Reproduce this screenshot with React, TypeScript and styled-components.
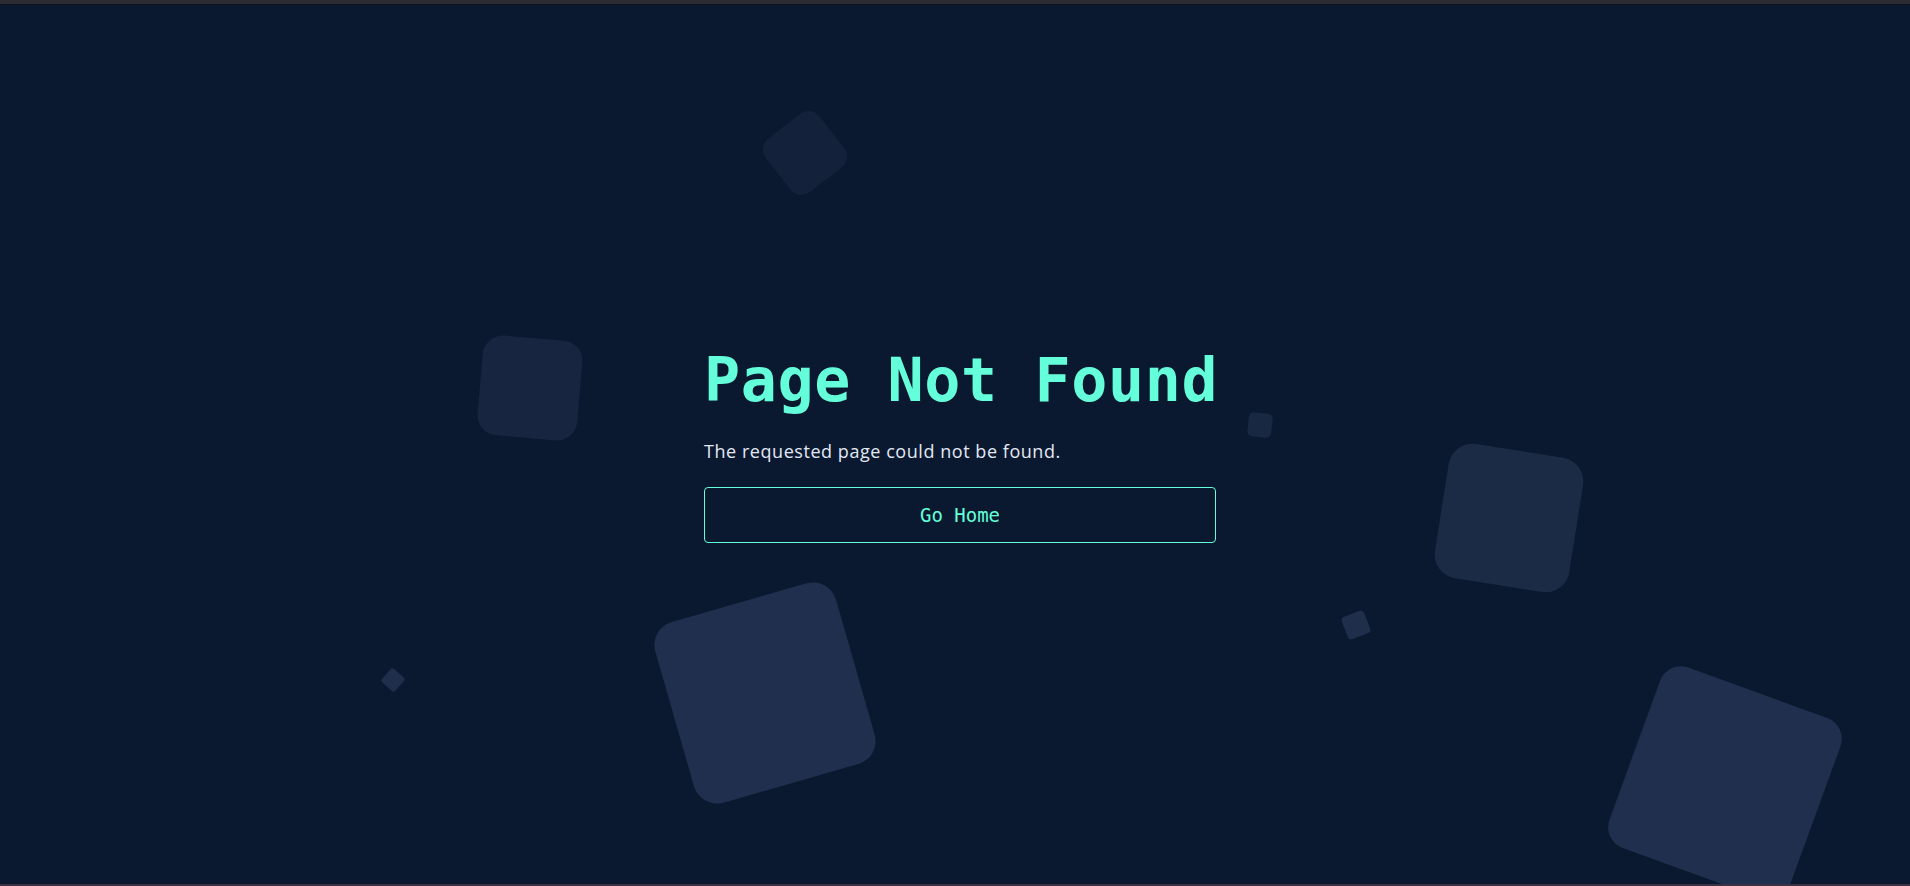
import React from "react";
import styled, { createGlobalStyle } from "styled-components";

const GlobalStyle = createGlobalStyle`
  html, body {
    margin: 0;
    padding: 0;
    background: #0a192f;
  }
  * { box-sizing: border-box; }
`;

const Page = styled.div`
  position: relative;
  height: 886px;
  display: flex;
  flex-direction: column;
  overflow: hidden;
  background: #0a192f;
`;

const TopBar = styled.div`
  height: 5px;
  flex: none;
  background: #2c2b33;
  border-bottom: 1px solid #101018;
  position: relative;
  z-index: 2;
`;

const BottomBar = styled.div`
  height: 2px;
  flex: none;
  background: #3a3142;
  position: relative;
  z-index: 2;
`;

const Main = styled.main`
  flex: 1;
  display: flex;
  align-items: center;
  justify-content: center;
  padding-left: 10px;
`;

const Shape = styled.div<{
  $x: number;
  $y: number;
  $size: number;
  $r: number;
  $rot: number;
  $c: string;
}>`
  position: absolute;
  left: ${(p) => p.$x - p.$size / 2}px;
  top: ${(p) => p.$y - p.$size / 2}px;
  width: ${(p) => p.$size}px;
  height: ${(p) => p.$size}px;
  border-radius: ${(p) => p.$r}px;
  background: ${(p) => p.$c};
  transform: rotate(${(p) => p.$rot}deg);
  z-index: 0;
`;

const Content = styled.section`
  position: relative;
  z-index: 1;
  width: 512px;
  display: flex;
  flex-direction: column;
`;

const Title = styled.h1`
  margin: 0;
  font-family: "DejaVu Sans Mono", "Liberation Mono", monospace;
  font-weight: 700;
  font-size: 60px;
  line-height: 66px;
  letter-spacing: 0.6px;
  color: #64ffda;
  white-space: nowrap;
`;

const Subtitle = styled.p`
  margin: 25px 0 0;
  font-family: "Open Sans", "Noto Sans", sans-serif;
  font-size: 18px;
  line-height: 27px;
  letter-spacing: 0.55px;
  color: #e2e8f5;
`;

const HomeButton = styled.a`
  margin-top: 22px;
  height: 56px;
  display: flex;
  align-items: center;
  justify-content: center;
  border: 1px solid #64ffda;
  border-radius: 4px;
  background: transparent;
  color: #64ffda;
  font-family: "DejaVu Sans Mono", "Liberation Mono", monospace;
  font-size: 19px;
  text-decoration: none;
  cursor: pointer;
`;

const shapes = [
  { x: 805, y: 153, size: 68, r: 14, rot: -38, c: "#13213a" },
  { x: 530, y: 388, size: 100, r: 20, rot: 5, c: "#172540" },
  { x: 1260, y: 425, size: 24, r: 5, rot: 6, c: "#182742" },
  { x: 1509, y: 518, size: 136, r: 24, rot: 9, c: "#1b2a45" },
  { x: 1356, y: 625, size: 24, r: 4, rot: -21, c: "#1e2e4b" },
  { x: 1725, y: 783, size: 192, r: 22, rot: 20, c: "#1f2f4d" },
  { x: 765, y: 693, size: 188, r: 24, rot: -16, c: "#1f2f4d" },
  { x: 393, y: 680, size: 18, r: 3, rot: 42, c: "#1e2e4b" },
];

export default function App() {
  return (
    <>
      <GlobalStyle />
      <Page>
        <TopBar />
        {shapes.map((s, i) => (
          <Shape
            key={i}
            $x={s.x}
            $y={s.y}
            $size={s.size}
            $r={s.r}
            $rot={s.rot}
            $c={s.c}
          />
        ))}
        <Main>
          <Content>
            <Title>Page Not Found</Title>
            <Subtitle>The requested page could not be found.</Subtitle>
            <HomeButton href="#">Go Home</HomeButton>
          </Content>
        </Main>
        <BottomBar />
      </Page>
    </>
  );
}
